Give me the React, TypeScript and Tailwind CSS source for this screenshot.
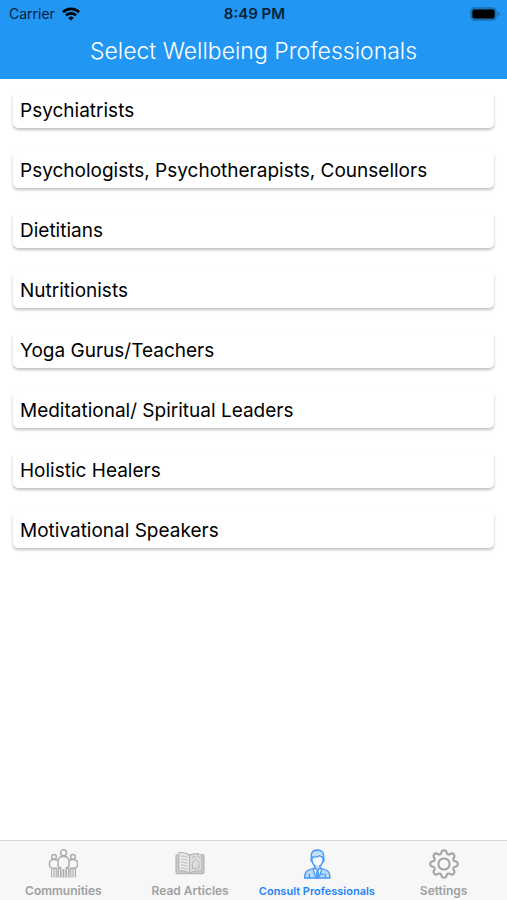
import type { ReactNode } from 'react'

type Tab = {
    label: string
    icon: ReactNode
    active?: boolean
}

const PROFESSIONALS: string[] = [
    'Psychiatrists',
    'Psychologists, Psychotherapists, Counsellors',
    'Dietitians',
    'Nutritionists',
    'Yoga Gurus/Teachers',
    'Meditational/ Spiritual Leaders',
    'Holistic Healers',
    'Motivational Speakers'
]

function WifiIcon() {
    return (
        <svg
            viewBox="0 0 18 14"
            className="h-[14px] w-[18px]"
            fill="none"
            stroke="currentColor"
            strokeWidth="2.6"
            aria-hidden="true">
            <path d="M1 5.2a11.4 11.4 0 0 1 16 0" />
            <path d="M4 8.4a7.1 7.1 0 0 1 10 0" />
            <path
                d="M9 13.6 6.3 10.9a3.8 3.8 0 0 1 5.4 0Z"
                fill="currentColor"
                stroke="none"
            />
        </svg>
    )
}

function BatteryIcon() {
    return (
        <svg
            viewBox="0 0 30 14"
            className="h-[14px] w-[30px]"
            aria-hidden="true">
            <rect x="0.8" y="0.8" width="25.4" height="12.4" rx="3.6" fill="#1a72b5" stroke="#1a72b5" strokeWidth="1.2" />
            <rect x="2.4" y="2.4" width="22.2" height="9.2" rx="2" fill="#000" />
            <path d="M27.6 4.8c1.6.4 2.2 1.2 2.2 2.2s-.6 1.8-2.2 2.2Z" fill="#1a72b5" />
        </svg>
    )
}

function CommunitiesIcon() {
    return (
        <svg
            viewBox="0 0 30 30"
            className="size-[30px]"
            fill="none"
            stroke="#adadad"
            strokeWidth="1.5"
            strokeLinejoin="round"
            aria-hidden="true">
            <circle cx="15.5" cy="3.8" r="3" />
            <circle cx="6" cy="7.8" r="2.4" />
            <circle cx="25" cy="7.8" r="2.4" />
            <path d="M12.6 19.500c-1.500-.6-2.600-1.900-2.600-3.700v-3.300c0-3 2-5 5.500-5s5.500 2 5.500 5v3.300c0 1.800-1.100 3.100-2.600 3.700" />
            <path d="M9 19.300H4c-1.700-.8-2.600-2-2.600-3.600v-1.500c0-2.300 1.700-3.800 4.600-3.800 1.600 0 2.900.4 3.700 1.200" />
            <path d="M22 19.300h5c1.700-.8 2.600-2 2.600-3.600v-1.500c0-2.300-1.700-3.800-4.600-3.800-1.600 0-2.900.4-3.700 1.200" />
            <path d="M12.600 18v10.500M15.500 20v8.500M18.400 18v10.500M10.200 19v9.500M20.800 19v9.500" />
            <path
                d="M3.600 19.300v9.200M6 19.300v9.200M8.200 19.300v9.200M22.800 19.300v9.200M25 19.300v9.200M27.400 19.300v9.200"
                strokeWidth="1.2"
            />
            <path d="M13.800 20.500v8M17.200 20.500v8" strokeWidth="0.7" />
        </svg>
    )
}

function ArticlesIcon() {
    return (
        <svg
            viewBox="0 0 30 30"
            className="size-[30px]"
            fill="none"
            stroke="#b8b8b8"
            strokeWidth="1.2"
            strokeLinejoin="round"
            aria-hidden="true">
            <path
                d="M2.600 5.500c-1 0-1.600.6-1.600 1.600V23c0 1 .6 1.600 1.600 1.600h24.800c1 0 1.600-.6 1.600-1.600V7.100c0-1-.6-1.600-1.600-1.600Z"
                fill="#c8c8c8"
            />
            <path d="M14.500 6.500C11.500 4 8 3.400 4 3.400v18c4.200 0 7.700.8 10.500 2.800Z" fill="#ececec" />
            <path d="M14.500 6.500c2-1.400 5-1.900 9-1.900L27 8v13.500c-5 0-9.500.6-12.500 2.700Z" fill="#dcdcdc" />
            <path d="M23.500 4.600V8H27" fill="#efefef" />
            <path
                d="M6 7c2.500 0 4.500.4 6.500 1.500M6 10c2.500 0 4.500.4 6.500 1.500M6 13c2.500 0 4.500.4 6.500 1.500M6 16c2.500 0 4.500.4 6.500 1.500M6 19c2.500 0 4.500.4 6.500 1.500"
                strokeWidth="1"
            />
            <path d="M17 8.500c1.200-.5 2.600-.8 4-.8M17.500 13l3-2.500 3.500 3v5.500l-6.500.7Z" strokeWidth="1" />
        </svg>
    )
}

function ConsultIcon() {
    return (
        <svg
            viewBox="0 0 30 30"
            className="size-[30px]"
            fill="none"
            stroke="#4699f3"
            strokeWidth="1.3"
            strokeLinejoin="round"
            strokeLinecap="round"
            aria-hidden="true">
            <path d="M9.500 9.500C8.300 5 10 1.200 15 1c4.600-.2 7.500 2.500 6.500 8.500" fill="#c3defb" />
            <path
                d="M10 8c3.400.4 6.200-.2 7.400-1.200 1 .9 2 1.200 3.600 1.200v3c0 3.600-2.700 6.800-5.500 6.800S10 14.600 10 11Z"
                fill="#f7f7f8"
            />
            <path d="M9.800 9.500c-1.500 0-1.400 3 .4 3.300M21.200 9.500c1.500 0 1.400 3-.4 3.300" />
            <path
                d="M12.700 17v2L6.500 21c-2.200.8-3.200 2.300-3.500 4.500L2.500 29H28l-.4-3.500c-.3-2.200-1.300-3.700-3.500-4.500l-5.900-2v-2"
                fill="#b9d8fb"
            />
            <path d="m12.700 19 2.800 2.500 2.700-2.500 1.500 1.200L18 26l-2.500 3-2.600-3-1.700-5.800Z" fill="#f7f7f8" />
            <path d="m15.500 21.500-1 2.500 1 5 1-5ZM7.300 25.500V29M23.300 25.500V29M19.500 25.300h2" />
        </svg>
    )
}

function SettingsIcon() {
    return (
        <svg
            viewBox="0 0 30 30"
            className="size-[30px]"
            fill="none"
            stroke="#a2a2a2"
            strokeWidth="2"
            strokeLinejoin="round"
            aria-hidden="true">
            <circle cx="15" cy="15" r="5.6" />
            <path d="M12.300 3.800C12.600 2 13.300 1.200 15 1.200s2.400.8 2.700 2.600c.3 1.700 1.900 2.300 3.300 1.300 1.500-1.100 2.500-1.200 3.700 0s1.100 2.200 0 3.700c-1 1.400-.4 3.100 1.300 3.400 1.900.3 2.800 1.100 2.800 2.800s-.9 2.500-2.800 2.800c-1.700.3-2.300 2-1.300 3.400 1.100 1.500 1.200 2.500 0 3.700s-2.200 1.100-3.700 0c-1.400-1-3-.4-3.300 1.300-.3 1.800-1 2.600-2.700 2.600s-2.400-.8-2.700-2.600c-.3-1.700-1.900-2.300-3.300-1.300-1.500 1.100-2.500 1.200-3.700 0s-1.100-2.200 0-3.700c1-1.400.4-3.100-1.300-3.400-1.900-.3-2.800-1.100-2.800-2.800s.9-2.500 2.800-2.800c1.700-.3 2.300-2 1.300-3.400-1.100-1.500-1.200-2.500 0-3.700s2.200-1.100 3.700 0c1.400 1 3 .4 3.300-1.300Z" />
        </svg>
    )
}

const TABS: Tab[] = [
    { label: 'Communities', icon: <CommunitiesIcon /> },
    { label: 'Read Articles', icon: <ArticlesIcon /> },
    { label: 'Consult Professionals', icon: <ConsultIcon />, active: true },
    { label: 'Settings', icon: <SettingsIcon /> }
]

export default function App() {
    return (
        <div className="flex min-h-screen flex-col bg-white font-['Inter',sans-serif] text-black">
            <header className="bg-[#2196f3] pb-2">
                {/* Status bar */}
                <div className="grid h-7 grid-cols-3 items-center pr-[7px] pl-[9px] text-[#06223a]">
                    <div className="flex items-center gap-[7px] text-sm">
                        Carrier
                        <span className="text-black">
                            <WifiIcon />
                        </span>
                    </div>
                    <div className="text-center text-[15px] font-semibold">8:49 PM</div>
                    <div className="flex justify-end">
                        <BatteryIcon />
                    </div>
                </div>
                <h1 className="pt-1 text-center text-[23px] leading-[39px] font-light text-white">
                    Select Wellbeing Professionals
                </h1>
            </header>

            <main className="flex-1 px-[13px] pt-[13px]">
                <ul className="flex flex-col gap-6">
                    {PROFESSIONALS.map((name) => (
                        <li key={name}>
                            <button
                                type="button"
                                className="block h-9 w-full rounded-[5px] bg-white px-[7px] pt-0.5 text-left text-[19px] shadow-[0_2px_3px_rgba(0,0,0,0.25)]">
                                {name}
                            </button>
                        </li>
                    ))}
                </ul>
            </main>

            <nav
                aria-label="Main"
                className="grid h-[60px] grid-cols-4 border-t border-[#d8d8d8] bg-[#f7f7f8]">
                {TABS.map((tab) => (
                    <button
                        key={tab.label}
                        type="button"
                        aria-current={tab.active ? 'page' : undefined}
                        className={[
                            'flex flex-col items-center gap-1 pt-2 leading-4 font-semibold whitespace-nowrap',
                            tab.active ? 'text-[11px] text-[#2384f5]' : 'text-xs text-[#a0a0a0]'
                        ].join(' ')}>
                        {tab.icon}
                        {tab.label}
                    </button>
                ))}
            </nav>
        </div>
    )
}
